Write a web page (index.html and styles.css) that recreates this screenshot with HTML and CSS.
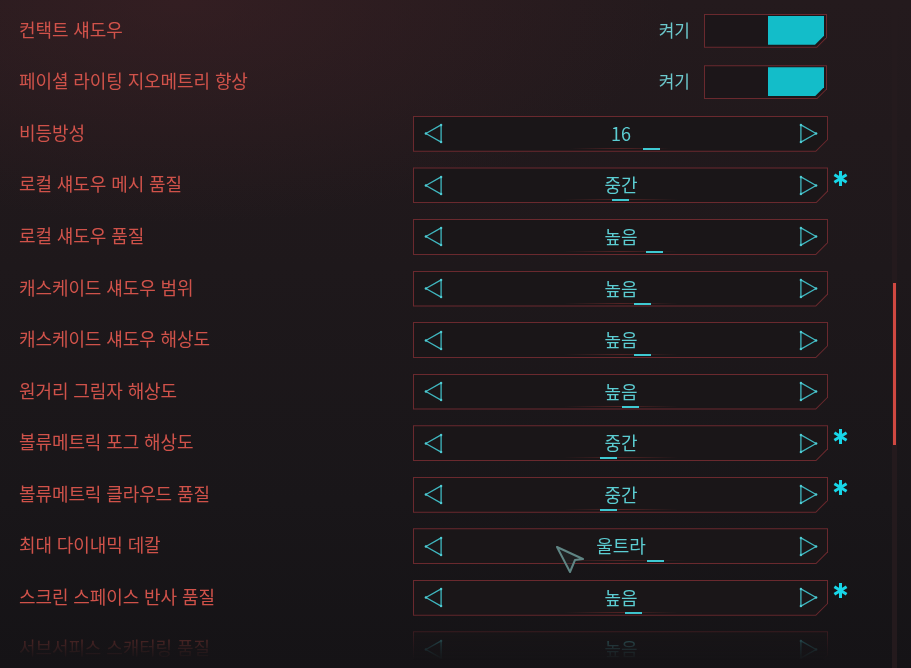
FILE: index.html
```
<!DOCTYPE html>
<html lang="ko">
<head>
  <meta charset="UTF-8" />
  <meta name="viewport" content="width=device-width, initial-scale=1" />
  <title>그래픽 설정</title>
  <link rel="stylesheet" href="styles.css">
</head>
<body>

<div class="screen">
  <div class="list">

    <div class="row">
      <span class="label">컨택트 섀도우</span>
      <div class="switch-wrap">
        <span class="state">켜기</span>
        <div class="switch"><div class="switch-in"><span class="knob"></span></div></div>
      </div>
    </div>

    <div class="row">
      <span class="label">페이셜 라이팅 지오메트리 향상</span>
      <div class="switch-wrap">
        <span class="state">켜기</span>
        <div class="switch"><div class="switch-in"><span class="knob"></span></div></div>
      </div>
    </div>

    <div class="row">
      <span class="label">비등방성</span>
      <div class="picker"><div class="picker-in">
        <svg class="arrow" viewBox="0 0 20 22"><polygon points="18,2 2,11 18,20"/><circle cx="18" cy="2" r="1.3"/><circle cx="2" cy="11" r="1.3"/><circle cx="18" cy="20" r="1.3"/></svg>
        <span class="value">16<i class="cursor c-gap"></i></span>
        <svg class="arrow" viewBox="0 0 20 22"><polygon points="2,2 18,11 2,20"/><circle cx="2" cy="2" r="1.3"/><circle cx="18" cy="11" r="1.3"/><circle cx="2" cy="20" r="1.3"/></svg>
      </div></div>
    </div>

    <div class="row">
      <span class="label">로컬 섀도우 메시 품질</span>
      <div class="picker"><div class="picker-in">
        <svg class="arrow" viewBox="0 0 20 22"><polygon points="18,2 2,11 18,20"/><circle cx="18" cy="2" r="1.3"/><circle cx="2" cy="11" r="1.3"/><circle cx="18" cy="20" r="1.3"/></svg>
        <span class="value">중간<i class="cursor c-mid"></i></span>
        <svg class="arrow" viewBox="0 0 20 22"><polygon points="2,2 18,11 2,20"/><circle cx="2" cy="2" r="1.3"/><circle cx="18" cy="11" r="1.3"/><circle cx="2" cy="20" r="1.3"/></svg>
      </div></div>
      <svg class="mark" viewBox="0 0 16 18"><path d="M8 1v16M1.5 5l13 8M14.5 5l-13 8"/></svg>
    </div>

    <div class="row">
      <span class="label">로컬 섀도우 품질</span>
      <div class="picker"><div class="picker-in">
        <svg class="arrow" viewBox="0 0 20 22"><polygon points="18,2 2,11 18,20"/><circle cx="18" cy="2" r="1.3"/><circle cx="2" cy="11" r="1.3"/><circle cx="18" cy="20" r="1.3"/></svg>
        <span class="value">높음<i class="cursor c-gap-s"></i></span>
        <svg class="arrow" viewBox="0 0 20 22"><polygon points="2,2 18,11 2,20"/><circle cx="2" cy="2" r="1.3"/><circle cx="18" cy="11" r="1.3"/><circle cx="2" cy="20" r="1.3"/></svg>
      </div></div>
    </div>

    <div class="row">
      <span class="label">캐스케이드 섀도우 범위</span>
      <div class="picker"><div class="picker-in">
        <svg class="arrow" viewBox="0 0 20 22"><polygon points="18,2 2,11 18,20"/><circle cx="18" cy="2" r="1.3"/><circle cx="2" cy="11" r="1.3"/><circle cx="18" cy="20" r="1.3"/></svg>
        <span class="value">높음<i class="cursor c-tail"></i></span>
        <svg class="arrow" viewBox="0 0 20 22"><polygon points="2,2 18,11 2,20"/><circle cx="2" cy="2" r="1.3"/><circle cx="18" cy="11" r="1.3"/><circle cx="2" cy="20" r="1.3"/></svg>
      </div></div>
    </div>

    <div class="row">
      <span class="label">캐스케이드 섀도우 해상도</span>
      <div class="picker"><div class="picker-in">
        <svg class="arrow" viewBox="0 0 20 22"><polygon points="18,2 2,11 18,20"/><circle cx="18" cy="2" r="1.3"/><circle cx="2" cy="11" r="1.3"/><circle cx="18" cy="20" r="1.3"/></svg>
        <span class="value">높음<i class="cursor c-tail"></i></span>
        <svg class="arrow" viewBox="0 0 20 22"><polygon points="2,2 18,11 2,20"/><circle cx="2" cy="2" r="1.3"/><circle cx="18" cy="11" r="1.3"/><circle cx="2" cy="20" r="1.3"/></svg>
      </div></div>
    </div>

    <div class="row">
      <span class="label">원거리 그림자 해상도</span>
      <div class="picker"><div class="picker-in">
        <svg class="arrow" viewBox="0 0 20 22"><polygon points="18,2 2,11 18,20"/><circle cx="18" cy="2" r="1.3"/><circle cx="2" cy="11" r="1.3"/><circle cx="18" cy="20" r="1.3"/></svg>
        <span class="value">높음<i class="cursor c-end"></i></span>
        <svg class="arrow" viewBox="0 0 20 22"><polygon points="2,2 18,11 2,20"/><circle cx="2" cy="2" r="1.3"/><circle cx="18" cy="11" r="1.3"/><circle cx="2" cy="20" r="1.3"/></svg>
      </div></div>
    </div>

    <div class="row">
      <span class="label">볼류메트릭 포그 해상도</span>
      <div class="picker"><div class="picker-in">
        <svg class="arrow" viewBox="0 0 20 22"><polygon points="18,2 2,11 18,20"/><circle cx="18" cy="2" r="1.3"/><circle cx="2" cy="11" r="1.3"/><circle cx="18" cy="20" r="1.3"/></svg>
        <span class="value">중간<i class="cursor c-start"></i></span>
        <svg class="arrow" viewBox="0 0 20 22"><polygon points="2,2 18,11 2,20"/><circle cx="2" cy="2" r="1.3"/><circle cx="18" cy="11" r="1.3"/><circle cx="2" cy="20" r="1.3"/></svg>
      </div></div>
      <svg class="mark" viewBox="0 0 16 18"><path d="M8 1v16M1.5 5l13 8M14.5 5l-13 8"/></svg>
    </div>

    <div class="row">
      <span class="label">볼류메트릭 클라우드 품질</span>
      <div class="picker"><div class="picker-in">
        <svg class="arrow" viewBox="0 0 20 22"><polygon points="18,2 2,11 18,20"/><circle cx="18" cy="2" r="1.3"/><circle cx="2" cy="11" r="1.3"/><circle cx="18" cy="20" r="1.3"/></svg>
        <span class="value">중간<i class="cursor c-start"></i></span>
        <svg class="arrow" viewBox="0 0 20 22"><polygon points="2,2 18,11 2,20"/><circle cx="2" cy="2" r="1.3"/><circle cx="18" cy="11" r="1.3"/><circle cx="2" cy="20" r="1.3"/></svg>
      </div></div>
      <svg class="mark" viewBox="0 0 16 18"><path d="M8 1v16M1.5 5l13 8M14.5 5l-13 8"/></svg>
    </div>

    <div class="row">
      <span class="label">최대 다이내믹 데칼</span>
      <div class="picker"><div class="picker-in">
        <svg class="arrow" viewBox="0 0 20 22"><polygon points="18,2 2,11 18,20"/><circle cx="18" cy="2" r="1.3"/><circle cx="2" cy="11" r="1.3"/><circle cx="18" cy="20" r="1.3"/></svg>
        <span class="value">울트라<i class="cursor c-after"></i></span>
        <svg class="arrow" viewBox="0 0 20 22"><polygon points="2,2 18,11 2,20"/><circle cx="2" cy="2" r="1.3"/><circle cx="18" cy="11" r="1.3"/><circle cx="2" cy="20" r="1.3"/></svg>
      </div></div>
    </div>

    <div class="row">
      <span class="label">스크린 스페이스 반사 품질</span>
      <div class="picker"><div class="picker-in">
        <svg class="arrow" viewBox="0 0 20 22"><polygon points="18,2 2,11 18,20"/><circle cx="18" cy="2" r="1.3"/><circle cx="2" cy="11" r="1.3"/><circle cx="18" cy="20" r="1.3"/></svg>
        <span class="value">높음<i class="cursor c-end2"></i></span>
        <svg class="arrow" viewBox="0 0 20 22"><polygon points="2,2 18,11 2,20"/><circle cx="2" cy="2" r="1.3"/><circle cx="18" cy="11" r="1.3"/><circle cx="2" cy="20" r="1.3"/></svg>
      </div></div>
      <svg class="mark" viewBox="0 0 16 18"><path d="M8 1v16M1.5 5l13 8M14.5 5l-13 8"/></svg>
    </div>

    <div class="row">
      <span class="label">서브서피스 스캐터링 품질</span>
      <div class="picker"><div class="picker-in">
        <svg class="arrow" viewBox="0 0 20 22"><polygon points="18,2 2,11 18,20"/><circle cx="18" cy="2" r="1.3"/><circle cx="2" cy="11" r="1.3"/><circle cx="18" cy="20" r="1.3"/></svg>
        <span class="value">높음</span>
        <svg class="arrow" viewBox="0 0 20 22"><polygon points="2,2 18,11 2,20"/><circle cx="2" cy="2" r="1.3"/><circle cx="18" cy="11" r="1.3"/><circle cx="2" cy="20" r="1.3"/></svg>
      </div></div>
    </div>

  </div>

  <div class="scrollbar"><div class="thumb"></div></div>

  <!-- mouse pointer -->
  <svg class="pointer" viewBox="0 0 30 30"><polygon points="2,3 28,15 20,16 15,28"/></svg>
</div>

</body>
</html>
```

FILE: styles.css
```
body {
  margin: 0;
  font-family: "Noto Sans CJK KR", "Noto Sans", sans-serif;
  background: #1b1619;
}
.screen {
  position: relative;
  width: 911px;
  height: 668px;
  overflow: hidden;
  display: flex;
  background:
    radial-gradient(ellipse 700px 320px at 20% 0%, rgba(70, 35, 40, 0.45), transparent 70%),
    linear-gradient(180deg, #241a1d 0%, #1e181b 40%, #191619 75%, #151316 100%);
}
.list {
  width: 868px;
  padding-top: 5px;
  -webkit-mask-image: linear-gradient(180deg, #000 612px, rgba(0,0,0,0.4) 632px, rgba(0,0,0,0.14) 648px, transparent 660px);
  mask-image: linear-gradient(180deg, #000 612px, rgba(0,0,0,0.4) 632px, rgba(0,0,0,0.14) 648px, transparent 660px);
}
.row {
  height: 51.56px;
  display: grid;
  grid-template-columns: 394px 415px 40px;
  align-items: center;
  padding-left: 19px;
}
.label {
  color: #d0524a;
  font-size: 18px;
  letter-spacing: -0.1px;
  margin-bottom: 4px;
  white-space: nowrap;
}

/* on/off switch */
.switch-wrap {
  display: flex;
  justify-content: flex-end;
  align-items: center;
  gap: 14px;
  padding-right: 1px;
}
.state {
  color: #6cc9cd;
  font-size: 17px;
  margin-bottom: 3px;
}
.switch {
  width: 123px;
  height: 34px;
  padding: 1px;
  box-sizing: border-box;
  background: #6a292e;
  clip-path: polygon(0 0, 100% 0, 100% calc(100% - 10px), calc(100% - 10px) 100%, 0 100%);
}
.switch-in {
  height: 100%;
  background: #1c1619;
  display: flex;
  justify-content: flex-end;
  padding: 1px 2px 2px 0;
  box-sizing: border-box;
  clip-path: polygon(0 0, 100% 0, 100% calc(100% - 9.4px), calc(100% - 9.4px) 100%, 0 100%);
}
.knob {
  width: 56px;
  height: 100%;
  background: #13bdc9;
  clip-path: polygon(0 0, 100% 0, 100% calc(100% - 9px), calc(100% - 9px) 100%, 0 100%);
}

/* left / right selector */
.picker {
  height: 36px;
  padding: 1px;
  box-sizing: border-box;
  background: #6a292e;
  clip-path: polygon(0 0, 100% 0, 100% calc(100% - 12px), calc(100% - 12px) 100%, 0 100%);
}
.picker-in {
  height: 100%;
  background: #1a1618;
  display: flex;
  align-items: center;
  justify-content: space-between;
  padding: 0 9px 0 10px;
  box-sizing: border-box;
  clip-path: polygon(0 0, 100% 0, 100% calc(100% - 11.4px), calc(100% - 11.4px) 100%, 0 100%);
}
.arrow {
  width: 19px;
  height: 21px;
  fill: none;
  stroke: #3fb5bd;
  stroke-width: 1.4;
  stroke-linejoin: round;
}
.arrow circle {
  fill: #4fcbd3;
  stroke: none;
}
.value {
  position: relative;
  color: #5ccdd2;
  font-size: 18px;
  margin-bottom: 2px;
  line-height: 22px;
}
.value::before {
  content: "";
  position: absolute;
  left: -40px;
  right: -40px;
  bottom: -5px;
  height: 1px;
  background: linear-gradient(90deg, transparent, rgba(190, 60, 60, 0.35), transparent);
}
.cursor {
  position: absolute;
  bottom: -6px;
  width: 17px;
  height: 2px;
  background: #3fc9d2;
}
.c-gap { left: calc(100% + 12px); }
.c-gap-s { left: calc(100% + 8px); }
.c-tail { left: calc(100% - 4px); }
.c-after { left: calc(100% + 1px); }
.c-mid { left: 8px; }
.c-start { left: -4px; }
.c-end { left: 18px; }
.c-end2 { left: 21px; }

.mark {
  width: 15px;
  height: 17px;
  margin: 0 0 14px 5px;
  fill: none;
  stroke: #18d6e8;
  stroke-width: 3.2;
}

/* scrollbar */
.scrollbar {
  width: 5px;
  margin-left: 24px;
  background: #241a1d;
  padding-top: 283px;
  box-sizing: border-box;
}
.thumb {
  width: 3px;
  margin: 0 auto;
  height: 162px;
  background: #cf4841;
}

.pointer {
  position: absolute;
  left: 555px;
  top: 544px;
  width: 30px;
  height: 30px;
  fill: rgba(40, 50, 52, 0.35);
  stroke: #5f8584;
  stroke-width: 2;
  stroke-linejoin: round;
}
```
